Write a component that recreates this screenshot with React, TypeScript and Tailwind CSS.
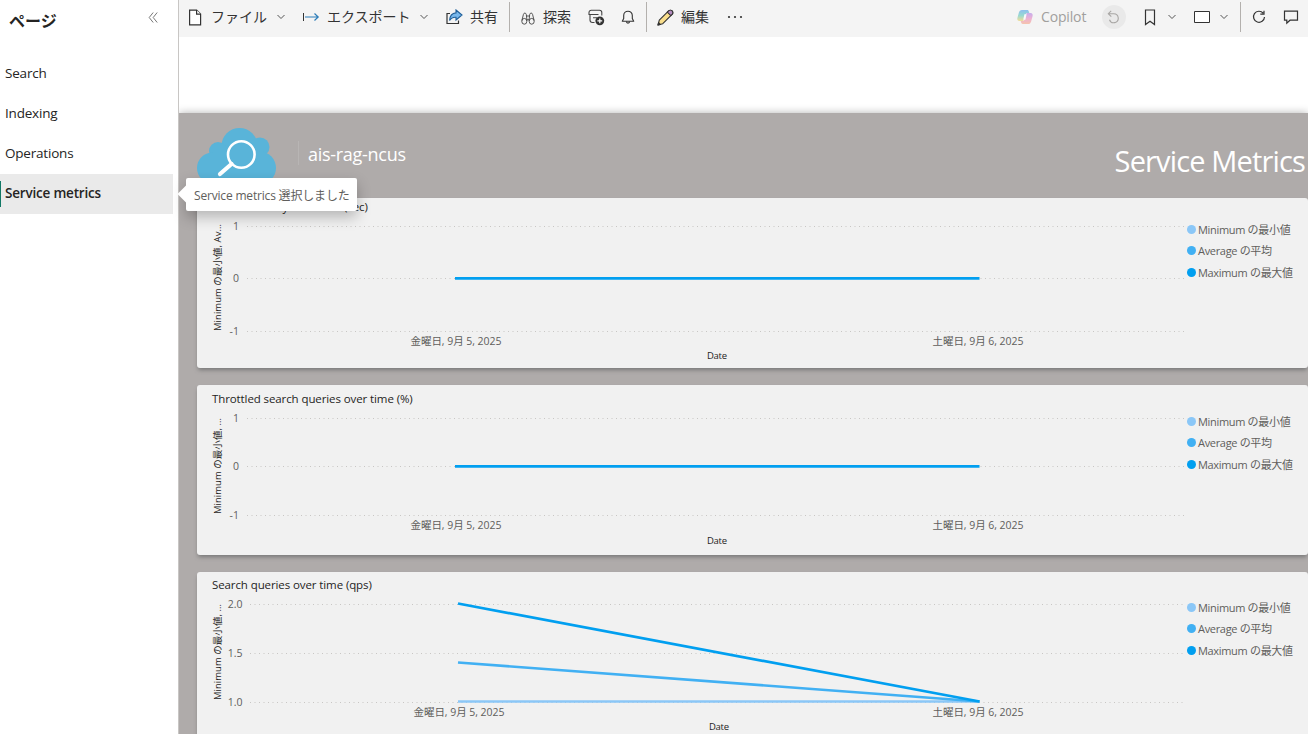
import React from 'react';

type Series = { color: string; values: [number, number] };

type ChartCard = {
    title: string;
    titleClass: string;
    legendClass: string;
    cardClass: string;
    axisTitle: string;
    axisTitleY: number;
    axisTitleLength: number;
    ticks: { label: string; y: number }[];
    tickX: number;
    gridX: number;
    pointX: number;
    dateX: number;
    dateY: number;
    captionX: number;
    captionY: number;
    svgHeight: number;
    series: Series[];
};

const LIGHT = '#8bc7f7';
const MEDIUM = '#41b0f3';
const STRONG = '#019ff0';

const LEGEND = [
    { label: 'Minimum の最小値', dot: 'bg-[#8bc7f7]' },
    { label: 'Average の平均', dot: 'bg-[#41b0f3]' },
    { label: 'Maximum の最大値', dot: 'bg-[#019ff0]' },
];

const CARDS: ChartCard[] = [
    {
        title: 'Search latency over time (sec)',
        titleClass: 'h-[18px]',
        legendClass: 'pt-[21px]',
        cardClass: 'h-[170px] mb-[17px]',
        axisTitle: 'Minimum の最小値, Av...',
        axisTitleY: 115,
        axisTitleLength: 107,
        ticks: [
            { label: '1', y: 10.5 },
            { label: '0', y: 62.5 },
            { label: '-1', y: 115.5 },
        ],
        tickX: 42,
        gridX: 50,
        pointX: 258,
        dateX: 259,
        dateY: 129,
        captionX: 520,
        captionY: 143,
        svgHeight: 150,
        series: [{ color: STRONG, values: [62.3, 62.3] }],
    },
    {
        title: 'Throttled search queries over time (%)',
        titleClass: 'h-[28px]',
        legendClass: 'pt-[26px]',
        cardClass: 'h-[170px] mb-[17px]',
        axisTitle: 'Minimum の最小値, ...',
        axisTitleY: 101,
        axisTitleLength: 96,
        ticks: [
            { label: '1', y: 5.5 },
            { label: '0', y: 53.5 },
            { label: '-1', y: 102.5 },
        ],
        tickX: 42,
        gridX: 50,
        pointX: 258,
        dateX: 259,
        dateY: 116,
        captionX: 520,
        captionY: 131,
        svgHeight: 140,
        series: [{ color: STRONG, values: [53.3, 53.3] }],
    },
    {
        title: 'Search queries over time (qps)',
        titleClass: 'h-[26px]',
        legendClass: 'pt-[25px]',
        cardClass: 'h-[170px]',
        axisTitle: 'Minimum の最小値, ...',
        axisTitleY: 102,
        axisTitleLength: 96,
        ticks: [
            { label: '2.0', y: 6.5 },
            { label: '1.5', y: 55.5 },
            { label: '1.0', y: 104.5 },
        ],
        tickX: 45.5,
        gridX: 53,
        pointX: 261,
        dateX: 262,
        dateY: 118,
        captionX: 522,
        captionY: 132,
        svgHeight: 140,
        series: [
            { color: LIGHT, values: [103.5, 103.5] },
            { color: MEDIUM, values: [64.5, 103.5] },
            { color: STRONG, values: [5.5, 103.5] },
        ],
    },
];

const PAGES = ['Search', 'Indexing', 'Operations'];

const Chevron = ({ className = '' }: { className?: string }) => (
    <svg className={`h-[6px] w-[10px] shrink-0 ${className}`} viewBox="0 0 10 6" fill="none" stroke="#555" strokeWidth="1">
        <path d="M1.500 1L5 4.500 8.500 1" />
    </svg>
);

const Divider = ({ className = '' }: { className?: string }) => (
    <div className={`h-[30px] w-px shrink-0 bg-[#b3b0ad] ${className}`} />
);

const CopilotIcon = () => (
    <svg className="ml-auto h-4 w-4 shrink-0 opacity-50" viewBox="0 0 16 16">
        <defs>
            <linearGradient id="cpA" x1="0" y1="0" x2="0" y2="1">
                <stop offset="0" stopColor="#2a8be8" />
                <stop offset="0.5" stopColor="#3fc0b0" />
                <stop offset="1" stopColor="#f2c83c" />
            </linearGradient>
            <linearGradient id="cpB" x1="0" y1="0" x2="0" y2="1">
                <stop offset="0" stopColor="#9a6ae6" />
                <stop offset="0.5" stopColor="#e870b4" />
                <stop offset="1" stopColor="#f79468" />
            </linearGradient>
        </defs>
        <path d="M5 1h5.2c1 0 1.4.7 1.7 1.7L12.3 4H10.500c-1.100 0-1.600.600-1.900 1.600L7.300 10c-.4 1.400-1 2-2.300 2H2.400C.7 12 0 10.600.4 9l1.500-5.400C2.400 1.900 3.300 1 5 1z" fill="url(#cpA)" />
        <path d="M11 15H5.800c-1 0-1.400-.7-1.700-1.700L3.700 12h1.800c1.100 0 1.600-.6 1.900-1.600L8.700 6c.4-1.400 1-2 2.300-2h2.600c1.700 0 2.400 1.400 2 3l-1.500 5.400c-.5 1.700-1.400 2.600-3.100 2.600z" fill="url(#cpB)" />
        <path d="M7.400 5.300h2.200L8.400 10.700H6.200z" fill="#fff" />
    </svg>
);

const Toolbar = () => (
    <div className="flex h-[37px] shrink-0 items-center bg-[#f4f4f4] pb-[3px] text-sm leading-5 text-[#333]">
        <svg className="ml-[9px] h-[17px] w-[14px] shrink-0" viewBox="0 0 14 17" fill="#fff" stroke="#333" strokeWidth="1.2">
            <path d="M1.600 1.100h7l4 4v10.800h-11z" />
            <path d="M8.600 1.100v4h4" />
        </svg>
        <span className="ml-[9px] w-14 shrink-0 whitespace-nowrap">ファイル</span>
        <Chevron className="ml-[9px]" />
        <svg className="ml-[16px] h-3 w-[18px] shrink-0" viewBox="0 0 18 12" fill="none">
            <path d="M1.500 2v8" stroke="#333" />
            <path d="M3 6h13M12.500 2.500L16.200 6l-3.700 3.500" stroke="#2b7cb8" strokeWidth="1.2" />
        </svg>
        <span className="ml-[7px] w-[84px] shrink-0 whitespace-nowrap">エクスポート</span>
        <Chevron className="ml-[8px]" />
        <svg className="ml-[17px] h-4 w-[17px] shrink-0" viewBox="0 0 17 16" fill="none">
            <path d="M4 4.500H1v10h11.500v-3" stroke="#333" strokeWidth="1.200" />
            <path d="M10 1l6 5-6 5V8.200C7 8 5 9 3.600 11.500 3.800 7 6 4.200 10 3.900z" fill="#79b8ec" stroke="#1f5f99" strokeWidth="1.100" />
        </svg>
        <span className="ml-[7px] w-7 shrink-0 whitespace-nowrap">共有</span>
        <Divider className="ml-[11px]" />
        <svg className="mt-[3px] ml-[11px] h-[13px] w-[14px] shrink-0" viewBox="0 0 14 13" fill="none" stroke="#444" strokeWidth="0.900">
            <ellipse cx="3.300" cy="9.300" rx="2.500" ry="2.900" />
            <ellipse cx="10.700" cy="9.300" rx="2.500" ry="2.900" />
            <path d="M.9 8.500L2.400 2.500C2.700.6 5 .6 5.300 2.500L6 8.500M13.100 8.500l-1.500-6C11.300.6 9 .6 8.700 2.500L8 8.500M5.400 4h3.200M5.800 7.800h2.400" />
        </svg>
        <span className="ml-[8px] w-7 shrink-0 whitespace-nowrap">探索</span>
        {/* note with an add badge */}
        <svg className="ml-[17px] h-[17px] w-[17px] shrink-0" viewBox="0 0 17 17" fill="none" stroke="#444" strokeWidth="1.100">
            <path d="M6.500 13.500H4.500a2.500 2.500 0 0 1-2.500-2.500V5.500H1V3.500A2.300 2.300 0 0 1 3.300 1.200h8.200A2.300 2.300 0 0 1 13.800 3.500v3M2 5.500h8.500M5 8.800h4" />
            <circle cx="11.800" cy="11.800" r="4.400" fill="#333" stroke="none" />
            <path d="M11.800 9.400v4.800M9.400 11.800h4.800" stroke="#fff" strokeWidth="1.200" />
        </svg>
        <svg className="ml-[16px] h-[14px] w-[14px] shrink-0" viewBox="0 0 14 14" fill="none" stroke="#333" strokeWidth="1.100">
            <path d="M1.300 11.200h11.400L11.300 8.500V5.500a4.300 4.300 0 0 0-8.600 0v3z" strokeLinejoin="round" />
            <path d="M5.400 11.500a1.600 1.600 0 0 0 3.200 0" />
        </svg>
        <Divider className="ml-[11px]" />
        <svg className="ml-[10px] h-[17px] w-[17px] shrink-0" viewBox="0 0 17 17" stroke="#333" strokeWidth="1.100" strokeLinejoin="round">
            <path d="M1 16l1.300-4.800L11.600 1.900a2.400 2.400 0 0 1 3.500 3.500L5.800 14.700z" fill="#f9de8c" />
            <path d="M10.300 3.200l1.300-1.300a2.400 2.400 0 0 1 3.500 3.500l-1.300 1.300z" fill="#b48bc0" />
            <path d="M1 16l.6-2.300 1.700 1.700z" fill="#333" />
        </svg>
        <span className="ml-[7px] w-7 shrink-0 whitespace-nowrap">編集</span>
        <svg className="ml-[18px] h-1 w-4 shrink-0" viewBox="0 0 16 4" fill="#333">
            <circle cx="2" cy="2" r="1.100" />
            <circle cx="8" cy="2" r="1.100" />
            <circle cx="14" cy="2" r="1.100" />
        </svg>
        <CopilotIcon />
        <span className="ml-[8px] w-[46px] shrink-0 text-sm tracking-[-0.15px] text-[#a19f9d]">Copilot</span>
        <div className="ml-[15px] flex h-6 w-6 shrink-0 items-center justify-center rounded-full bg-[#e9e9e9]">
            <svg className="h-[14px] w-[14px]" viewBox="0 0 14 14" fill="none" stroke="#a8a6a4" strokeWidth="1.100">
                <path d="M4.200.800L1.300 3.700l3 2.900M1.500 3.700h5.300a4.500 4.500 0 1 1-4.300 6" />
            </svg>
        </div>
        <svg className="ml-[18px] h-[17px] w-3 shrink-0" viewBox="0 0 12 17" fill="none" stroke="#333" strokeWidth="1.200">
            <path d="M1.500 1h9v14.500L6 12.300l-4.500 3.200z" />
        </svg>
        <Chevron className="ml-[11px]" />
        <svg className="ml-[17px] h-3 w-4 shrink-0" viewBox="0 0 16 12" fill="#fff" stroke="#333">
            <path d="M.5.500h15v11H.5z" />
        </svg>
        <Chevron className="ml-[9px]" />
        <Divider className="ml-[11px]" />
        <svg className="ml-[11px] h-[14px] w-[14px] shrink-0" viewBox="0 0 14 14" fill="none" stroke="#333" strokeWidth="1.200">
            <path d="M11.200 3.200A5.500 5.500 0 1 0 12.500 7M12 .7v3.500H8.300" />
        </svg>
        <svg className="mr-[9px] ml-[17px] h-[15px] w-4 shrink-0" viewBox="0 0 16 15" fill="none" stroke="#333" strokeWidth="1.200">
            <path d="M1.500 1.200h13v9H7l-3.200 3v-3H1.500z" />
        </svg>
    </div>
);

const Sidebar = () => (
    <nav className="flex h-full w-[179px] shrink-0 flex-col border-r border-[#c8c6c4] bg-white">
        <div className="flex h-[53px] items-start justify-between pt-[11px] pr-[20px] pl-[9px]">
            <h2 className="text-base leading-5 font-bold text-[#252423]">ページ</h2>
            <svg className="mt-px h-[11px] w-[10px]" viewBox="0 0 10 11" fill="none" stroke="#777">
                <path d="M5.200.500l-4 5 4 5M9.200.500l-4 5 4 5" />
            </svg>
        </div>
        {PAGES.map((page) => (
            <div key={page} className="flex h-10 items-center pl-[5px] text-[13.5px] tracking-[-0.2px] text-[#252423]">
                {page}
            </div>
        ))}
        <div className="mt-px mr-[5px] flex h-10 items-center bg-[#eaeaea] text-[13.5px] font-semibold tracking-[-0.2px] text-[#252423]">
            <span className="mr-[4px] h-[26px] w-px bg-[#117865]" />
            <span className="pb-[2px]">Service metrics</span>
        </div>
    </nav>
);

const ReportHeader = () => (
    <header className="flex h-[85px] shrink-0 items-start pl-[18px] text-white">
        <svg className="mt-[14px] h-[60px] w-20 shrink-0" viewBox="0 0 80 60">
            <g fill="#59b4d9">
                <circle cx="42.500" cy="19" r="18" />
                <circle cx="63" cy="20" r="9.500" />
                <circle cx="21" cy="24" r="9" />
                <circle cx="15.500" cy="41" r="15.500" />
                <circle cx="62.500" cy="41" r="16.500" />
                <path d="M16 25h47v31H16z" />
            </g>
            <circle cx="44.300" cy="27.500" r="13.300" fill="none" stroke="#fff" strokeWidth="2.600" />
            <path d="M34.500 37L23 47" stroke="#fff" strokeWidth="4.200" strokeLinecap="round" />
        </svg>
        <span className="mt-[28px] ml-[21px] h-6 w-px bg-[#b8b5b4]" />
        <h2 className="mt-[29px] ml-[9px] text-[18px] leading-6 tracking-[-0.28px] whitespace-nowrap">ais-rag-ncus</h2>
        <h1 className="mt-[28px] mr-[3px] ml-auto text-[29px] leading-10 tracking-[-0.85px] whitespace-nowrap">Service Metrics</h1>
    </header>
);

const LineChart = ({ card }: { card: ChartCard }) => (
    <svg className="block w-[988px] overflow-visible" height={card.svgHeight} fill="#605e5c" fontSize="10.5">
        <text
            transform={`translate(24 ${card.axisTitleY}) rotate(-90)`}
            fontSize="9.5"
            fill="#252423"
            textLength={card.axisTitleLength}
        >
            {card.axisTitle}
        </text>
        {card.ticks.map((tick) => (
            <g key={tick.label}>
                <text x={card.tickX} y={tick.y + 3.5} textAnchor="end">
                    {tick.label}
                </text>
                <path d={`M${card.gridX} ${tick.y}H988`} stroke="#c8c6c4" strokeDasharray="1 3.500" />
            </g>
        ))}
        {card.series.map((line) => (
            <path
                key={line.color}
                d={`M${card.pointX} ${line.values[0]}L782.500 ${line.values[1]}`}
                stroke={line.color}
                strokeWidth="2.700"
            />
        ))}
        <text x={card.dateX} y={card.dateY} textAnchor="middle" textLength="91">
            金曜日, 9月 5, 2025
        </text>
        <text x="781" y={card.dateY} textAnchor="middle" textLength="91">
            土曜日, 9月 6, 2025
        </text>
        <text x={card.captionX} y={card.captionY} fontSize="9.5" fill="#252423" textAnchor="middle" textLength="20">
            Date
        </text>
    </svg>
);

const MetricCard = ({ card }: { card: ChartCard }) => (
    <section className={`flex shrink-0 rounded-[3px] bg-[#f1f1f1] shadow-[0_3px_4px_-1px_#777] ${card.cardClass}`}>
        <div className="w-[988px] shrink-0">
            <h3 className={`flex items-center pl-[15px] text-[11.5px] tracking-[-0.1px] text-[#252423] ${card.titleClass}`}>
                {card.title}
            </h3>
            <LineChart card={card} />
        </div>
        <ul className={`ml-[2px] text-[11px] tracking-[-0.32px] text-[#605e5c] ${card.legendClass}`}>
            {LEGEND.map((item) => (
                <li key={item.label} className="flex h-[21.5px] items-center whitespace-nowrap">
                    <span className={`mr-[2px] mb-px h-[9px] w-[9px] rounded-full ${item.dot}`} />
                    {item.label}
                </li>
            ))}
        </ul>
    </section>
);

const SelectionTooltip = () => (
    <div className="absolute top-[178px] left-[186px] flex h-[33px] w-[171px] items-center rounded-[2px] bg-white pt-[2px] pl-[8px] text-xs whitespace-nowrap text-[#605e5c] shadow-[0_6px_14px_rgba(0,0,0,0.25)]">
        <span className="absolute top-[10px] -left-[6px] h-[12px] w-[12px] rotate-45 bg-white" />
        <span className="relative tracking-[-0.18px]">Service metrics 選択しました</span>
    </div>
);

export default function App() {
    return (
        <div className="relative flex h-[734px] w-[1308px] overflow-hidden bg-white font-['Open_Sans','Noto_Sans_CJK_JP',sans-serif]">
            <Sidebar />
            <main className="flex min-w-0 flex-1 flex-col overflow-hidden">
                <Toolbar />
                <div className="h-[76px] shrink-0 bg-white" />
                <div className="flex min-h-0 flex-1 flex-col bg-[#afabaa] shadow-[0_0_8px_rgba(0,0,0,0.3)]">
                    <ReportHeader />
                    <div className="flex flex-col pl-[18px]">
                        {CARDS.map((card) => (
                            <MetricCard key={card.title} card={card} />
                        ))}
                    </div>
                </div>
            </main>
            <SelectionTooltip />
        </div>
    );
}
